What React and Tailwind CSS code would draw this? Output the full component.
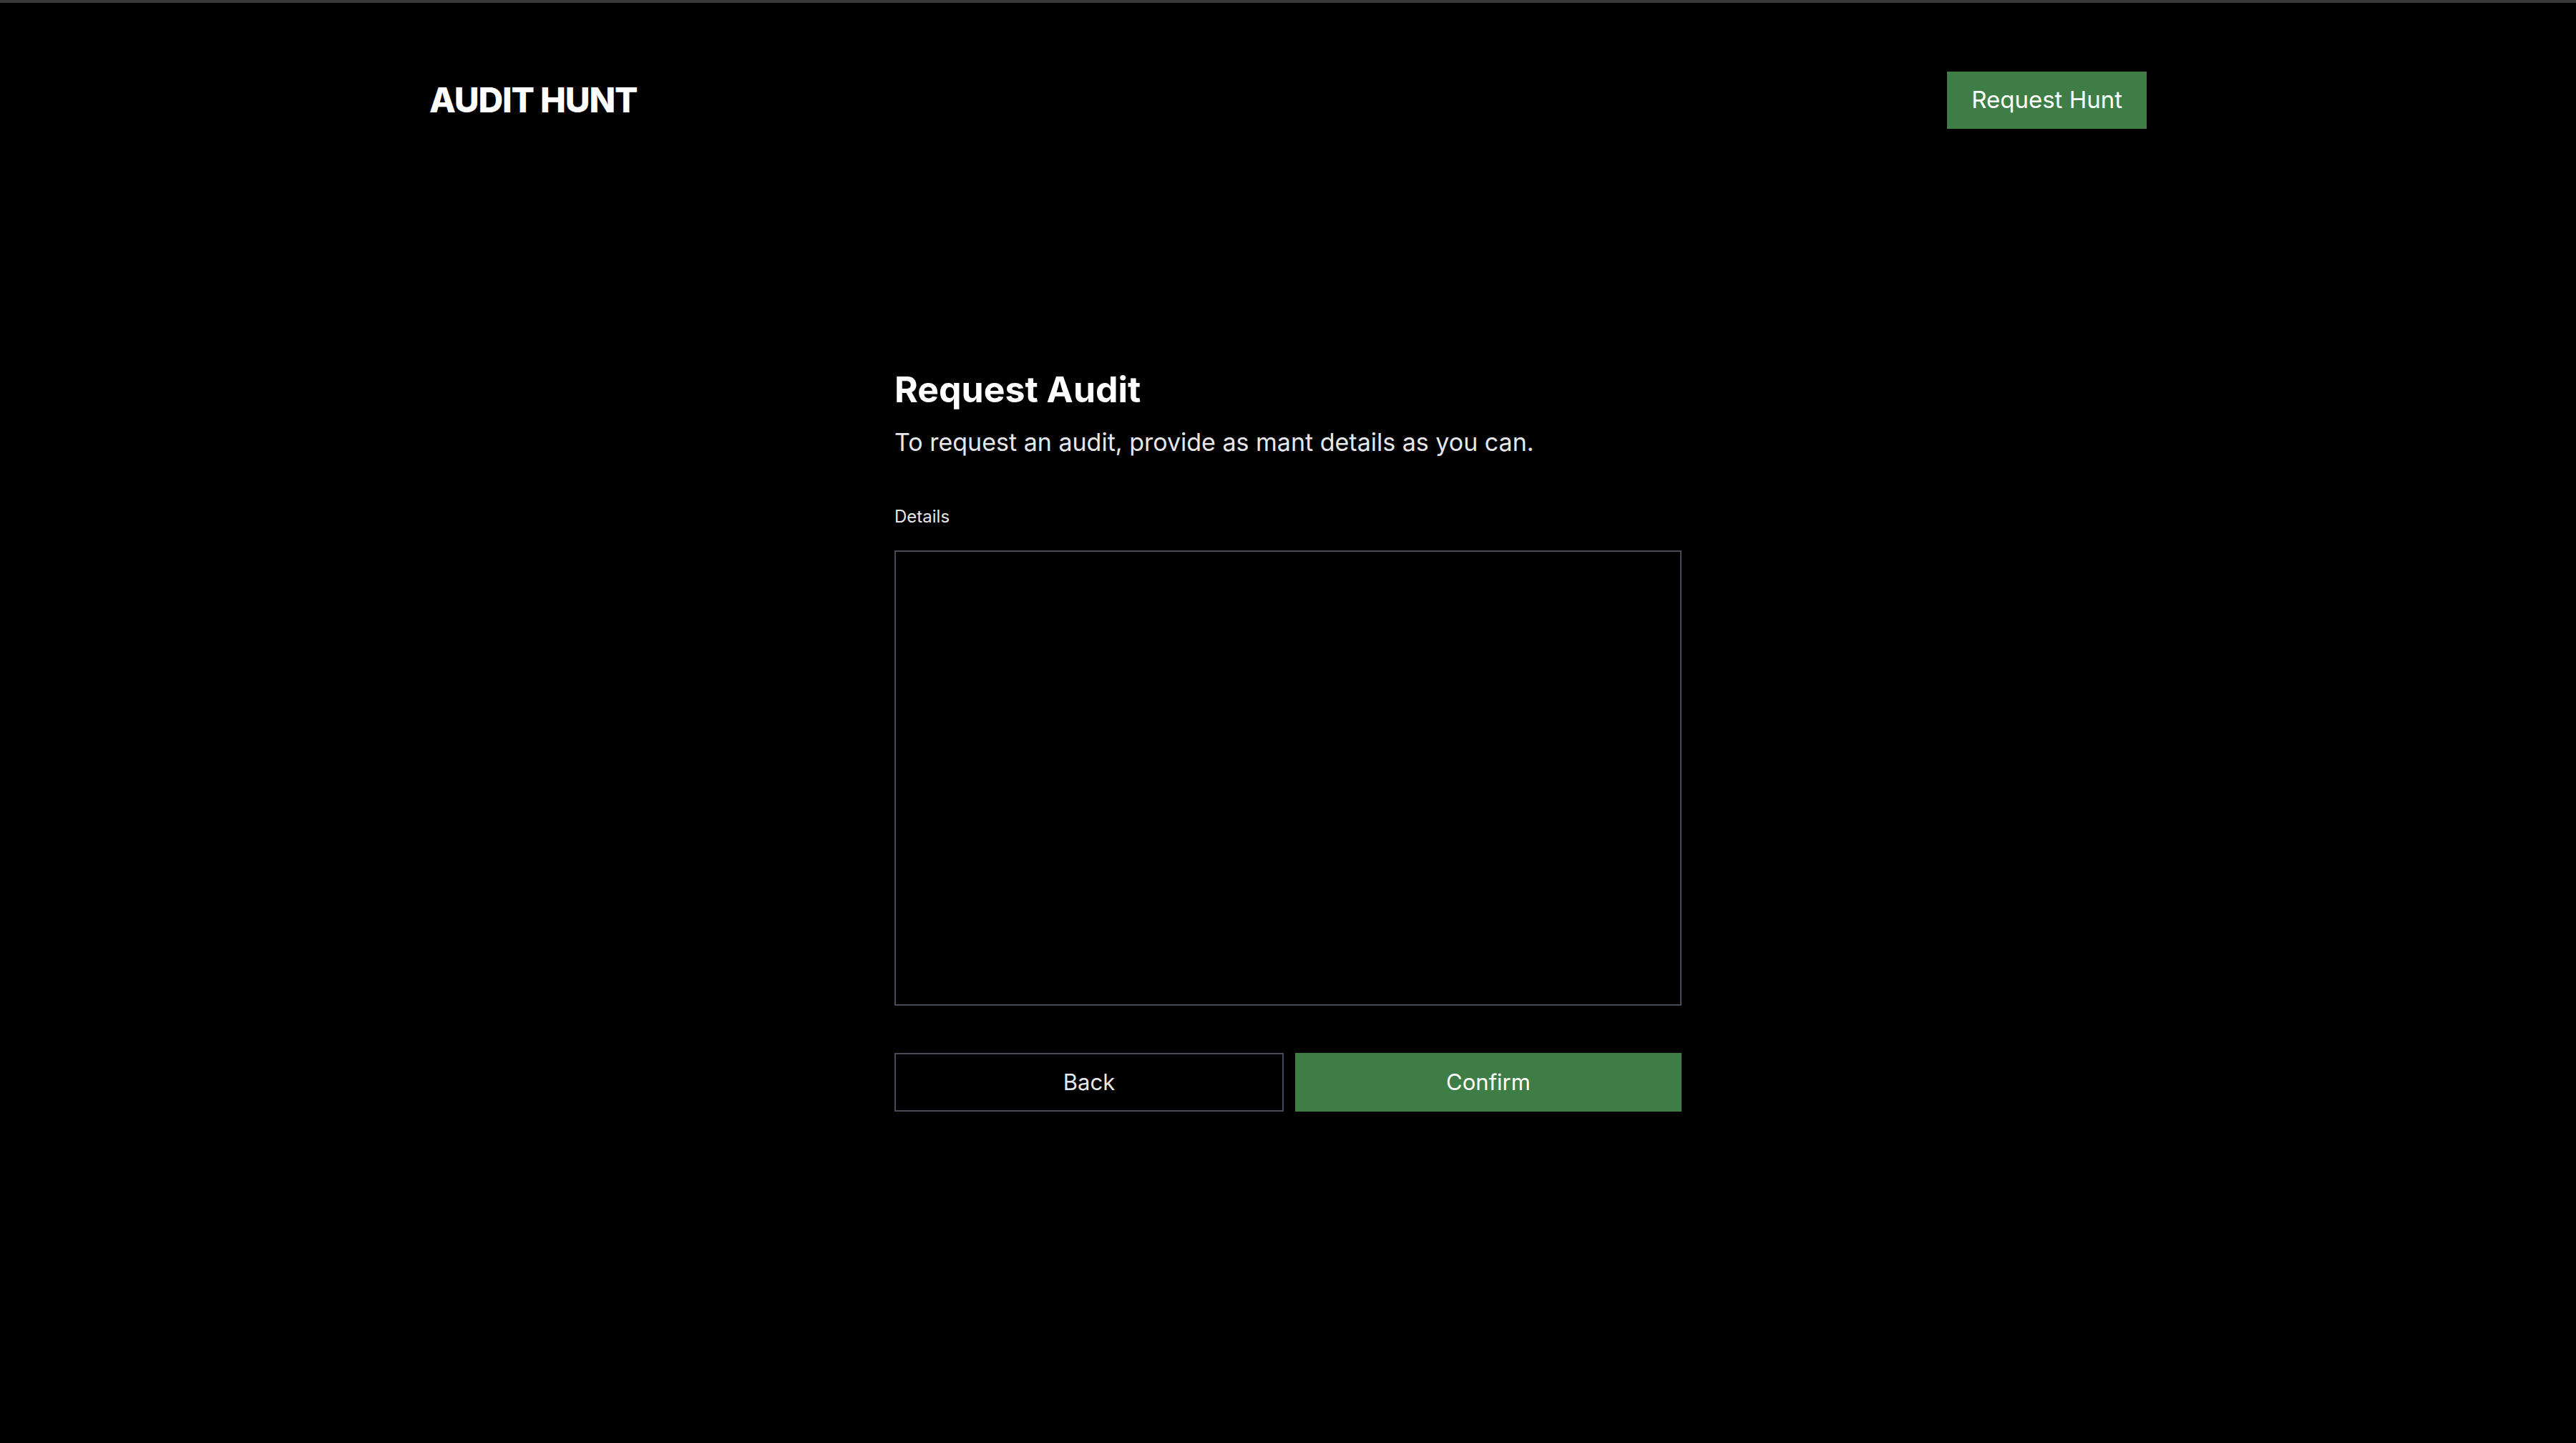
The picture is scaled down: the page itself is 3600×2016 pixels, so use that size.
export default function App() {
  return (
    <div
      className="min-h-screen bg-black text-white border-t-4 border-[#3a3a3a]"
      style={{ fontFamily: 'Inter, "Noto Sans", sans-serif' }}
    >
      <header className="w-[2400px] mx-auto pt-[96px] flex items-center justify-between">
        <h1 className="text-[48px] font-extrabold tracking-tight leading-none">AUDIT HUNT</h1>
        <button className="h-[80px] px-[34px] bg-[#3e7e46] text-[33px] font-normal text-white">
          Request Hunt
        </button>
      </header>

      <main className="w-[1100px] mx-auto mt-[334px]">
        <h2 className="text-[50px] font-bold leading-[60px]">Request Audit</h2>
        <p className="mt-[20px] text-[34px] leading-[48px] text-[#e5e7eb]">
          To request an audit, provide as mant details as you can.
        </p>

        <label className="block mt-[64px] text-[24px] leading-[32px] text-[#e5e7eb]">Details</label>
        <textarea className="block mt-[31px] w-full h-[636px] bg-black border-2 border-[#454b58] resize-none outline-none" />

        <div className="mt-[66px] flex gap-[16px]">
          <button className="flex-1 h-[82px] border-2 border-[#454b58] bg-black text-[31px] text-[#e5e7eb]">
            Back
          </button>
          <button className="flex-1 h-[82px] bg-[#3e7e46] text-[31px] text-white">Confirm</button>
        </div>
      </main>
    </div>
  );
}
